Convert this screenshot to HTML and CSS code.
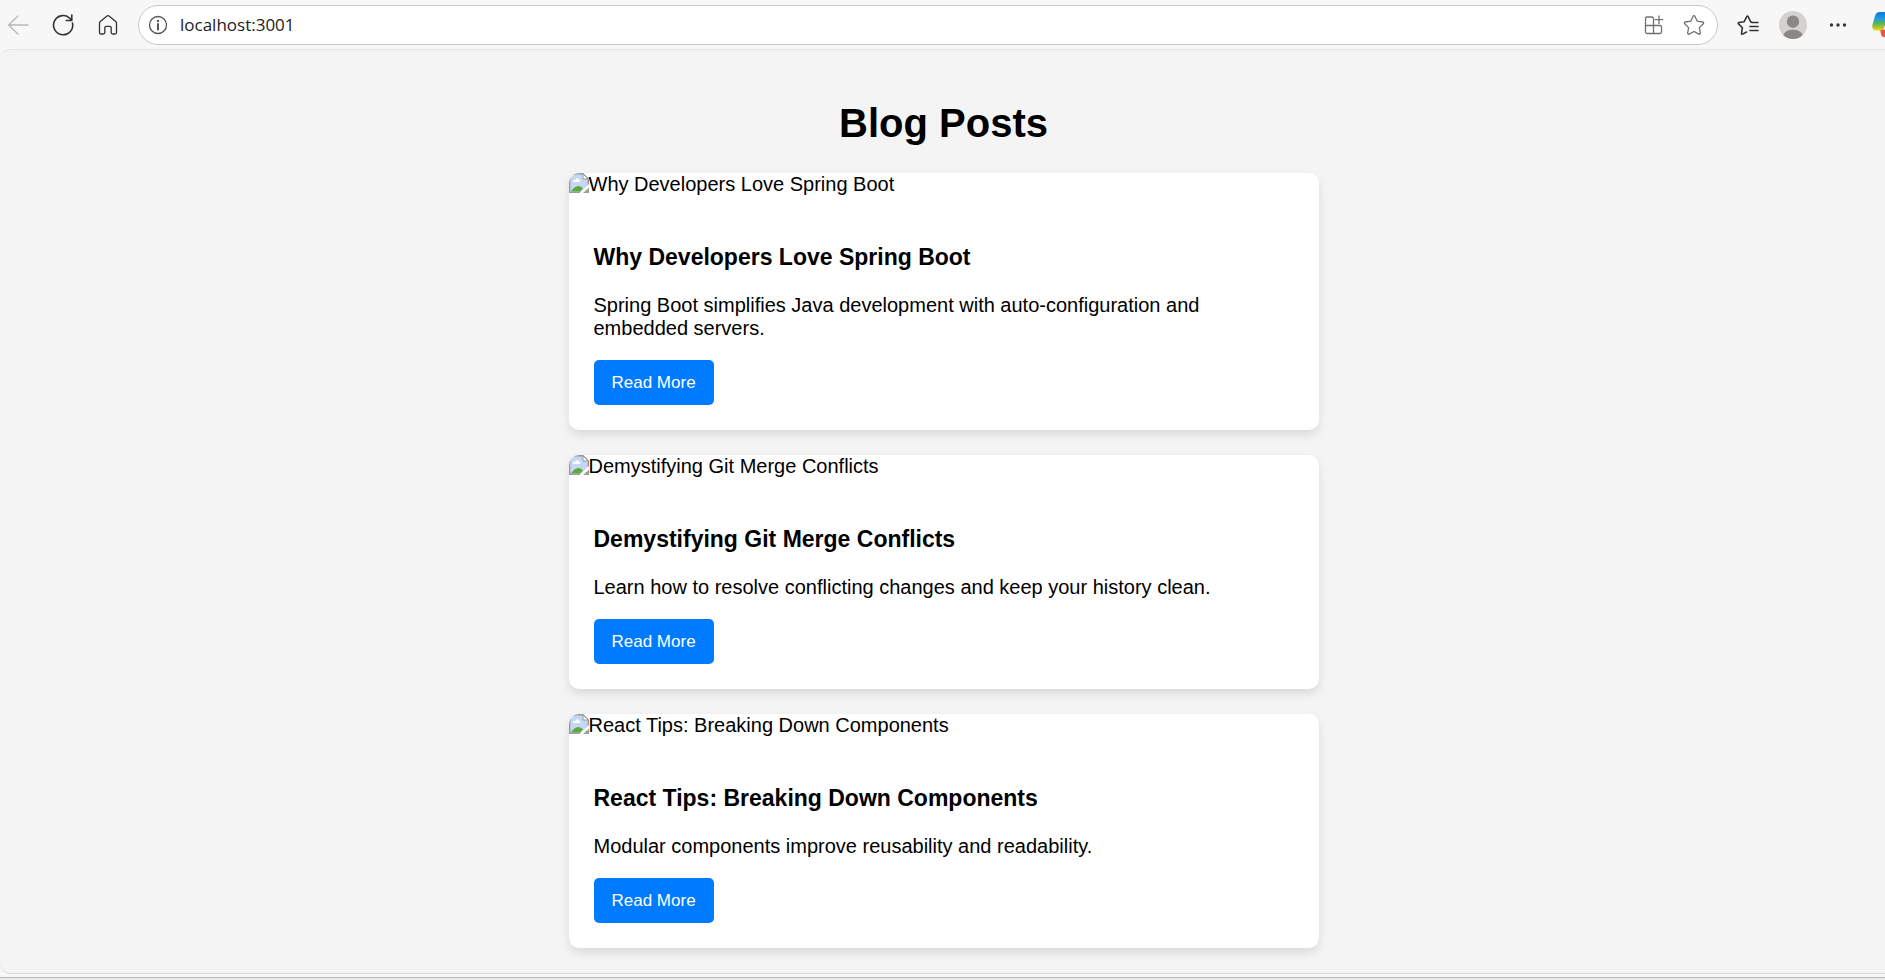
FILE: index.html
```html
<!DOCTYPE html>
<html lang="en">
<head>
<meta charset="utf-8">
<meta name="viewport" content="width=device-width, initial-scale=1">
<title>Blog Posts</title>
<link rel="stylesheet" href="styles.css">
</head>
<body>
<svg class="defs" aria-hidden="true">
  <symbol id="broken" viewBox="0 0 20 20">
    <path d="M1 1h13l5 5v13H1z" fill="#c5d7f4"/>
    <path d="M2 18.500c2-3 4-5 7-5.500 2 0 4 1 5 2.500l-3 3z" fill="#58ad36"/>
    <path d="M15 18.500l3.500-2.500v2.500z" fill="#58ad36"/>
    <path d="M4 8.500c0-2 2-2 2.500-1.500.500-2.500 3.500-2 3.500 0 2 0 2 2 0 2H5c-1 0-1 0-1-.5z" fill="#fff"/>
    <path d="M.7 19.300V.7H14l5.300 5.300v13.300z" fill="none" stroke="#9a9a9a" stroke-width="1.400"/>
    <path d="M14 1v5h5z" fill="#fff" stroke="#9a9a9a"/>
    <path d="M10.500 20L20 11v3.500L14 20z" fill="#fff"/>
  </symbol>
</svg>
<header class="toolbar">
  <button class="tool tool-muted" aria-label="Back"><svg class="icon" viewBox="0 0 24 24"><path d="M22 12H2.500M12 3L2.500 12l9.500 9"/></svg></button>
  <button class="tool" aria-label="Refresh"><svg class="icon icon-bold" viewBox="0 0 24 24"><path d="M21.500 10a9.600 9.600 0 1 1-3.200-5.200L20.500 7M20.800 2v5.500h-5.500"/></svg></button>
  <button class="tool" aria-label="Home"><svg class="icon" viewBox="0 0 24 24"><path d="M3.500 10.200c0-.7.300-1.200.8-1.600L11 3c.6-.5 1.400-.5 2 0l6.700 5.600c.5.400.8.900.8 1.600v9.300c0 .9-.6 1.500-1.500 1.500h-2.300c-.9 0-1.500-.6-1.500-1.500v-4.700c0-.9-.6-1.500-1.500-1.500h-3.400c-.9 0-1.500.6-1.500 1.500v4.700c0 .9-.6 1.500-1.500 1.500H5c-.9 0-1.500-.6-1.500-1.500z"/></svg></button>
  <div class="address">
    <button class="site-info" aria-label="Site information"><svg class="icon" viewBox="0 0 24 24"><circle cx="12" cy="12" r="8.500"/><path d="M12 11v5.500" stroke-width="2"/><circle cx="12" cy="8" r="1.200" fill="currentColor" stroke="none"/></svg></button>
    <input class="url" type="text" value="localhost:3001" aria-label="Address" spellcheck="false">
    <button class="pill-tool" aria-label="Install app"><svg class="icon" viewBox="0 0 24 24"><path d="M11.500 12.500V5.500a1.500 1.500 0 0 0-1.500-1.500H5a1.500 1.500 0 0 0-1.500 1.500V19A1.500 1.500 0 0 0 5 20.500h13a1.500 1.500 0 0 0 1.500-1.500v-5a1.500 1.500 0 0 0-1.500-1.500H3.500M11.500 12.500v8M17 3v7.500M13.300 6.700h7.400"/></svg></button>
    <button class="pill-tool" aria-label="Add to favorites"><svg class="icon" viewBox="0 0 24 24"><path d="M11.100 3.200c.4-.8 1.400-.8 1.800 0l2.400 5 5.400.8c.9.100 1.200 1.100.6 1.700l-3.900 3.900.9 5.400c.2.900-.7 1.500-1.500 1.100L12 18.500l-4.800 2.600c-.8.400-1.700-.2-1.500-1.100l.9-5.400-3.900-3.900c-.6-.6-.3-1.600.6-1.700l5.400-.8z"/></svg></button>
  </div>
  <button class="tool" aria-label="Favorites"><svg class="icon icon-bold" viewBox="0 0 24 24"><path d="M22 9.500h-6l-1.300-.7-2.600-5.300c-.3-.6-1-.6-1.300 0L8.200 8.700l-5.300.8c-.7.100-.9.900-.4 1.400l3.900 3.800-.9 5.600c-.1.600.5 1.100 1.100.8l3.900-2.100M14 13.500h8M14 17.500h8"/></svg></button>
  <button class="tool" aria-label="Profile"><svg class="avatar" viewBox="0 0 28 28"><circle cx="14" cy="14" r="14" fill="#d4d2cf"/><circle cx="14" cy="10.700" r="6.200" fill="#8b8784"/><path d="M4.200 24A10.500 8 0 0 1 23.800 24 14 14 0 0 1 4.200 24z" fill="#8b8784"/></svg></button>
  <button class="tool" aria-label="Settings and more"><svg class="icon" viewBox="0 0 24 24"><g fill="#333" stroke="none"><circle cx="5.500" cy="12" r="1.700"/><circle cx="12" cy="12" r="1.700"/><circle cx="18.500" cy="12" r="1.700"/></g></svg></button>
  <button class="copilot" aria-label="Copilot"><svg class="copilot-logo" viewBox="0 0 30 28">
    <defs><linearGradient id="cool" x1="0" y1="0" x2="0" y2="1"><stop offset="0" stop-color="#0a78d4"/><stop offset=".35" stop-color="#1c9ce8"/><stop offset=".65" stop-color="#62b84d"/><stop offset="1" stop-color="#f2d410"/></linearGradient></defs>
    <path d="M8 18.500h14l-3 5c-1 2-2 2.500-4 2.500h-3c-2 0-2.500-1-3-3z" fill="#f0523a"/>
    <path d="M8 1h13c-3 0-4 1-5 4l-4 12c-.5 1.500-1.500 2.500-4 2.500H4.500c-3.500 0-5-2.500-4-6L3 5c1-3 2-4 5-4z" fill="url(#cool)"/>
  </svg></button>
</header>
<main class="viewport">
  <div class="blog">
    <h1 class="title">Blog Posts</h1>
    <article class="card">
      <div class="cover"><svg class="broken" aria-hidden="true"><use href="#broken"/></svg><span>Why Developers Love Spring Boot</span></div>
      <div class="content">
        <h3 class="heading">Why Developers Love Spring Boot</h3>
        <p class="summary">Spring Boot simplifies Java development with auto-configuration and embedded servers.</p>
        <button class="read-more">Read More</button>
      </div>
    </article>
    <article class="card">
      <div class="cover"><svg class="broken" aria-hidden="true"><use href="#broken"/></svg><span>Demystifying Git Merge Conflicts</span></div>
      <div class="content">
        <h3 class="heading">Demystifying Git Merge Conflicts</h3>
        <p class="summary">Learn how to resolve conflicting changes and keep your history clean.</p>
        <button class="read-more">Read More</button>
      </div>
    </article>
    <article class="card">
      <div class="cover"><svg class="broken" aria-hidden="true"><use href="#broken"/></svg><span>React Tips: Breaking Down Components</span></div>
      <div class="content">
        <h3 class="heading">React Tips: Breaking Down Components</h3>
        <p class="summary">Modular components improve reusability and readability.</p>
        <button class="read-more">Read More</button>
      </div>
    </article>
  </div>
</main>
<footer class="window-edge"></footer>
</body>
</html>
```
FILE: styles.css
```css
* {
  box-sizing: border-box;
}

body {
  margin: 0;
  min-height: 100vh;
  display: flex;
  flex-direction: column;
  background: #f7f7f7;
  color: #000;
  font-family: "Liberation Sans", Arial, sans-serif;
  font-size: 20px;
  line-height: 23px;
}

button {
  border: 0;
  padding: 0;
  background: none;
  font-family: inherit;
  cursor: pointer;
}

.defs {
  display: none;
}

/* Browser toolbar */
.toolbar {
  display: flex;
  align-items: center;
  gap: 9px;
  height: 49px;
}

.tool {
  flex: none;
  display: flex;
  align-items: center;
  justify-content: center;
  width: 36px;
  height: 36px;
  color: #333;
}

.tool-muted {
  color: #b8b8b8;
}

.icon {
  flex: none;
  width: 24px;
  height: 24px;
  fill: none;
  stroke: currentColor;
  stroke-width: 1.3;
  stroke-linecap: round;
  stroke-linejoin: round;
}

.icon-bold {
  stroke-width: 1.6;
}

.avatar {
  width: 28px;
  height: 28px;
}

.address {
  flex: 1;
  display: flex;
  align-items: center;
  gap: 16px;
  height: 40px;
  margin: 0 3px;
  padding: 0 11px 0 7px;
  border: 1px solid #c8c8c8;
  border-radius: 20px;
  background: #fff;
}

.site-info,
.pill-tool {
  flex: none;
  display: flex;
  color: #707070;
}

.site-info {
  color: #555;
}

.url {
  flex: 1;
  min-width: 0;
  margin-left: -6px;
  padding: 0;
  border: 0;
  outline: 0;
  background: none;
  color: #222;
  font-family: "Open Sans", sans-serif;
  font-size: 17px;
  line-height: 24px;
}

.copilot {
  flex: none;
  width: 20px;
  height: 28px;
  padding-left: 7px;
  overflow: hidden;
}

.copilot-logo {
  display: block;
  width: 30px;
  height: 28px;
}

/* Page */
.viewport {
  flex: 1;
  padding: 50px 24px 22px 26px;
  border: solid #e6e6e6;
  border-width: 1px 0;
  border-bottom-color: #d8d8d8;
  border-radius: 10px 0 0 10px;
  background: #f4f4f4;
}

.blog {
  max-width: 750px;
  margin: 0 auto;
}

.title {
  margin: 0 0 27px;
  font-size: 40px;
  line-height: 46px;
  text-align: center;
}

.card {
  overflow: hidden;
  border-radius: 10px;
  background: #fff;
  box-shadow: 0 5px 10px rgba(0, 0, 0, 0.1);
}

.card + .card {
  margin-top: 25px;
}

.cover {
  display: flex;
}

.broken {
  width: 20px;
  height: 20px;
}

.content {
  padding: 25px;
}

.heading {
  margin: 23px 0;
  font-size: 23px;
  line-height: 27px;
}

.summary {
  margin: 0 0 20px;
}

.read-more {
  display: block;
  padding: 12px 18px;
  border-radius: 5px;
  background: #007bff;
  color: #fff;
  font-size: 17px;
  line-height: 21px;
}

.window-edge {
  height: 6px;
  border-bottom: 2px solid #ebebeb;
  box-shadow: inset 0 -1px #b8b8b8;
}
```
